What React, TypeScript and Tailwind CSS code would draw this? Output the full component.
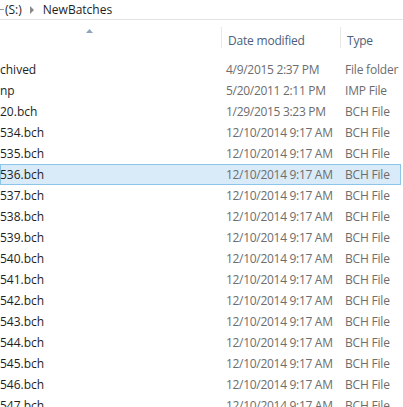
import React from "react";

type Row = { name: string; date: string; type: string };

const rows: Row[] = [
  { name: "chived", date: "4/9/2015 2:37 PM", type: "File folder" },
  { name: "np", date: "5/20/2011 2:11 PM", type: "IMP File" },
  { name: "20.bch", date: "1/29/2015 3:23 PM", type: "BCH File" },
  ...["534", "535", "536", "537", "538", "539", "540", "541", "542", "543", "544", "545", "546", "547"].map((n) => ({
    name: `${n}.bch`,
    date: "12/10/2014 9:17 AM",
    type: "BCH File",
  })),
];

const SELECTED = "536.bch";

export default function App() {
  return (
    <div className="w-[403px] h-[407px] overflow-hidden bg-white text-[12px] text-[#1e1e1e] font-['Open_Sans',sans-serif]">
      {/* breadcrumb */}
      <div className="h-[20px] border-b border-[#e3e3e3] flex items-center">
        <span className="w-[4px] h-[1px] bg-[#9a9a9a] mr-[1px]" />
        <span>(S:)</span>
        <svg width="5" height="8" viewBox="0 0 5 8" className="ml-[8px] mr-[8px]">
          <path d="M0 0 L4 4 L0 8 Z" fill="#8a8a8a" />
        </svg>
        <span>NewBatches</span>
      </div>

      {/* column headers */}
      <div className="h-[39px] flex">
        <div className="w-[221px] flex flex-col">
          <svg width="7" height="4" viewBox="0 0 7 4" className="ml-[86px] mt-[9px]">
            <path d="M0 4 L3.5 0 L7 4 Z" fill="#8ea4bb" />
          </svg>
        </div>
        <div className="w-[119px] mt-[7px] h-[21px] border-l border-[#e8e8e8] pl-[6px] pt-[4px] text-[#4c607a] leading-[20px] tracking-[-0.2px]">
          Date modified
        </div>
        <div className="flex-1 mt-[7px] h-[21px] border-l border-[#e8e8e8] pl-[6px] pt-[4px] text-[#4c607a] leading-[20px] tracking-[-0.2px]">
          Type
        </div>
      </div>

      {/* rows */}
      <div className="flex flex-col">
        {rows.map((r) => {
          const sel = r.name === SELECTED;
          return (
            <div
              key={r.name}
              className={
                sel
                  ? "h-[21px] w-[401px] flex items-center border border-[#8cc5ea] bg-[#d9ebf9]"
                  : "h-[21px] w-[401px] flex items-center border border-transparent"
              }
            >
              <div className="w-[226px] -ml-[1px] whitespace-nowrap">{r.name}</div>
              <div className="w-[119px] text-[#6d6d6d] whitespace-nowrap tracking-[-0.3px]">{r.date}</div>
              <div className="flex-1 text-[#6d6d6d] whitespace-nowrap tracking-[-0.2px]">{r.type}</div>
            </div>
          );
        })}
      </div>
    </div>
  );
}
